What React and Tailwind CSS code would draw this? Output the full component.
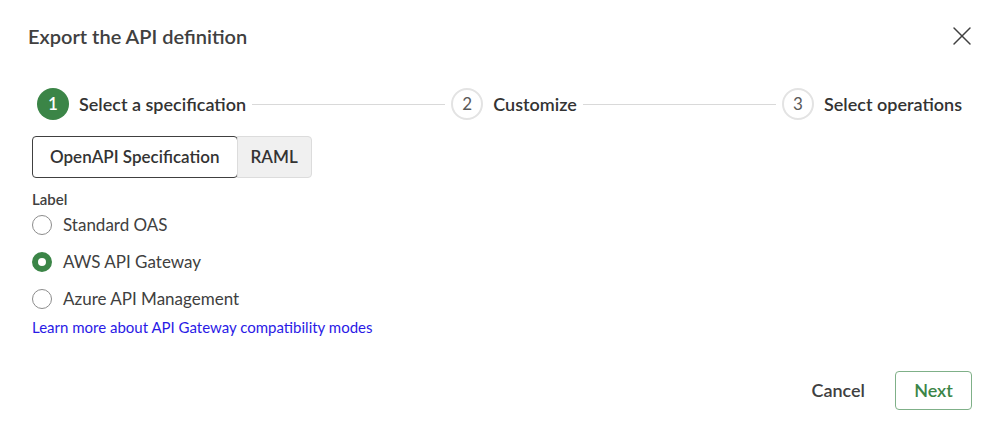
import { X } from 'lucide-react';

const Step = ({ n, label, active }) => (
  <div className="flex items-center gap-[10px] shrink-0">
    <div
      className={
        active
          ? 'w-8 h-8 rounded-full bg-[#3b8547] text-white flex items-center justify-center text-[17px] font-semibold'
          : 'w-8 h-8 rounded-full border-2 border-[#e3e3e3] text-[#595959] flex items-center justify-center text-[17px]'
      }
    >
      {n}
    </div>
    <span className="text-[18px] font-semibold text-[#333]">{label}</span>
  </div>
);

const Line = () => <div className="flex-1 h-px bg-[#d9d9d9] mx-[6px]" />;

const Radio = ({ label, checked }) => (
  <label className="flex items-center gap-[11px] h-[37px]">
    {checked ? (
      <span className="w-5 h-5 rounded-full border-[6px] border-[#3b8547] bg-white" />
    ) : (
      <span className="w-5 h-5 rounded-full border border-[#8c8c8c] bg-white" />
    )}
    <span className="text-[17px] text-[#404040]">{label}</span>
  </label>
);

export default function App() {
  return (
    <div className="w-[999px] h-[429px] bg-white font-['Lato',sans-serif] text-[#333] relative">
      <div className="flex items-center justify-between pl-[28px] pr-[21px] pt-[20px]">
        <h1 className="text-[20px] font-semibold text-[#404040]">Export the API definition</h1>
        <X className="w-[32px] h-[32px] text-[#404040]" strokeWidth={1.1} />
      </div>

      <div className="flex items-center pl-[37px] pr-[37px] mt-[36px]">
        <Step n="1" label="Select a specification" active />
        <Line />
        <Step n="2" label="Customize" />
        <Line />
        <Step n="3" label="Select operations" />
      </div>

      <div className="pl-[32px] mt-[16px]">
        <div className="flex">
          <button className="h-[42px] px-[17px] rounded-[4px] border border-[#404040] bg-white text-[17px] font-semibold text-[#333]">
            OpenAPI Specification
          </button>
          <button className="h-[42px] px-[13px] -ml-px rounded-r-[4px] border border-[#dcdcdc] bg-[#f0f0f0] text-[17px] font-semibold text-[#333]">
            RAML
          </button>
        </div>

        <div className="mt-[12px] text-[15px] font-semibold text-[#404040] leading-[18px]">Label</div>
        <div className="flex flex-col -mt-[2px]">
          <Radio label="Standard OAS" />
          <Radio label="AWS API Gateway" checked />
          <Radio label="Azure API Management" />
        </div>
        <a href="#" className="block -mt-[1px] text-[15px] text-[#2a1ae6]">
          Learn more about API Gateway compatibility modes
        </a>
      </div>

      <div className="absolute right-[27px] bottom-[19px] flex items-center gap-[14px]">
        <button className="h-[39px] px-[16px] text-[18px] font-semibold text-[#404040]">Cancel</button>
        <button className="h-[39px] w-[77px] rounded-[4px] border border-[#7fb088] text-[18px] font-semibold text-[#3b8547]">
          Next
        </button>
      </div>
    </div>
  );
}
